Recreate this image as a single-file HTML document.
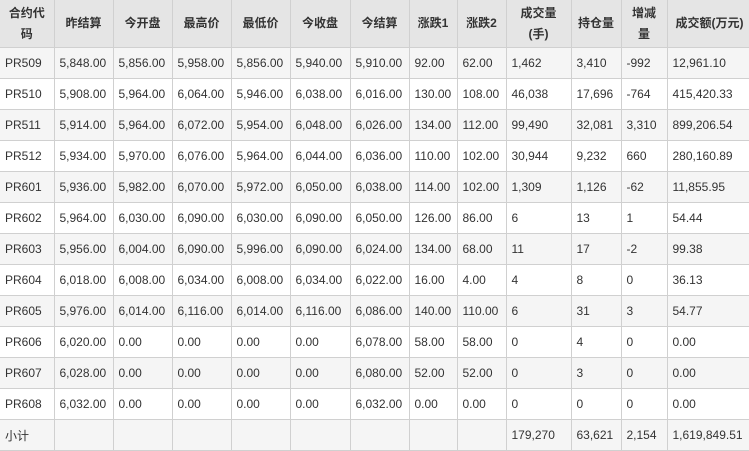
<!DOCTYPE html><html><head><meta charset="utf-8"><style>
body{margin:0;background:#fff;width:749px;height:446px;overflow:hidden}
table{border-collapse:collapse;table-layout:fixed;width:752px;font-family:"Liberation Sans","Noto Sans CJK SC",sans-serif;font-size:12px;color:#333}
td,th{border:1px solid #d0d0d0;padding:0 0 0 5px;text-align:left;white-space:nowrap;overflow:hidden;height:30px}
th{background:#e5e5e5;font-weight:bold;height:47px;text-align:center;padding:0 2px;line-height:21px;border-top:none}
tr:nth-child(even) td{background:#f5f5f5}
tr:nth-child(odd) td{background:#fff}
td:first-child,th:first-child{border-left:none}
</style></head><body><table>
<colgroup><col style="width:54px"><col style="width:59px"><col style="width:59px"><col style="width:59px"><col style="width:59px"><col style="width:60px"><col style="width:59px"><col style="width:48px"><col style="width:49px"><col style="width:65px"><col style="width:50px"><col style="width:46px"><col style="width:85px"></colgroup>
<tr><th>合约代<br>码</th><th>昨结算</th><th>今开盘</th><th>最高价</th><th>最低价</th><th>今收盘</th><th>今结算</th><th>涨跌1</th><th>涨跌2</th><th>成交量<br>(手)</th><th>持仓量</th><th>增减<br>量</th><th>成交额(万元)</th></tr>
<tr><td>PR509</td><td>5,848.00</td><td>5,856.00</td><td>5,958.00</td><td>5,856.00</td><td>5,940.00</td><td>5,910.00</td><td>92.00</td><td>62.00</td><td>1,462</td><td>3,410</td><td>-992</td><td>12,961.10</td></tr>
<tr><td>PR510</td><td>5,908.00</td><td>5,964.00</td><td>6,064.00</td><td>5,946.00</td><td>6,038.00</td><td>6,016.00</td><td>130.00</td><td>108.00</td><td>46,038</td><td>17,696</td><td>-764</td><td>415,420.33</td></tr>
<tr><td>PR511</td><td>5,914.00</td><td>5,964.00</td><td>6,072.00</td><td>5,954.00</td><td>6,048.00</td><td>6,026.00</td><td>134.00</td><td>112.00</td><td>99,490</td><td>32,081</td><td>3,310</td><td>899,206.54</td></tr>
<tr><td>PR512</td><td>5,934.00</td><td>5,970.00</td><td>6,076.00</td><td>5,964.00</td><td>6,044.00</td><td>6,036.00</td><td>110.00</td><td>102.00</td><td>30,944</td><td>9,232</td><td>660</td><td>280,160.89</td></tr>
<tr><td>PR601</td><td>5,936.00</td><td>5,982.00</td><td>6,070.00</td><td>5,972.00</td><td>6,050.00</td><td>6,038.00</td><td>114.00</td><td>102.00</td><td>1,309</td><td>1,126</td><td>-62</td><td>11,855.95</td></tr>
<tr><td>PR602</td><td>5,964.00</td><td>6,030.00</td><td>6,090.00</td><td>6,030.00</td><td>6,090.00</td><td>6,050.00</td><td>126.00</td><td>86.00</td><td>6</td><td>13</td><td>1</td><td>54.44</td></tr>
<tr><td>PR603</td><td>5,956.00</td><td>6,004.00</td><td>6,090.00</td><td>5,996.00</td><td>6,090.00</td><td>6,024.00</td><td>134.00</td><td>68.00</td><td>11</td><td>17</td><td>-2</td><td>99.38</td></tr>
<tr><td>PR604</td><td>6,018.00</td><td>6,008.00</td><td>6,034.00</td><td>6,008.00</td><td>6,034.00</td><td>6,022.00</td><td>16.00</td><td>4.00</td><td>4</td><td>8</td><td>0</td><td>36.13</td></tr>
<tr><td>PR605</td><td>5,976.00</td><td>6,014.00</td><td>6,116.00</td><td>6,014.00</td><td>6,116.00</td><td>6,086.00</td><td>140.00</td><td>110.00</td><td>6</td><td>31</td><td>3</td><td>54.77</td></tr>
<tr><td>PR606</td><td>6,020.00</td><td>0.00</td><td>0.00</td><td>0.00</td><td>0.00</td><td>6,078.00</td><td>58.00</td><td>58.00</td><td>0</td><td>4</td><td>0</td><td>0.00</td></tr>
<tr><td>PR607</td><td>6,028.00</td><td>0.00</td><td>0.00</td><td>0.00</td><td>0.00</td><td>6,080.00</td><td>52.00</td><td>52.00</td><td>0</td><td>3</td><td>0</td><td>0.00</td></tr>
<tr><td>PR608</td><td>6,032.00</td><td>0.00</td><td>0.00</td><td>0.00</td><td>0.00</td><td>6,032.00</td><td>0.00</td><td>0.00</td><td>0</td><td>0</td><td>0</td><td>0.00</td></tr>
<tr><td>小计</td><td></td><td></td><td></td><td></td><td></td><td></td><td></td><td></td><td>179,270</td><td>63,621</td><td>2,154</td><td>1,619,849.51</td></tr>
</table></body></html>
